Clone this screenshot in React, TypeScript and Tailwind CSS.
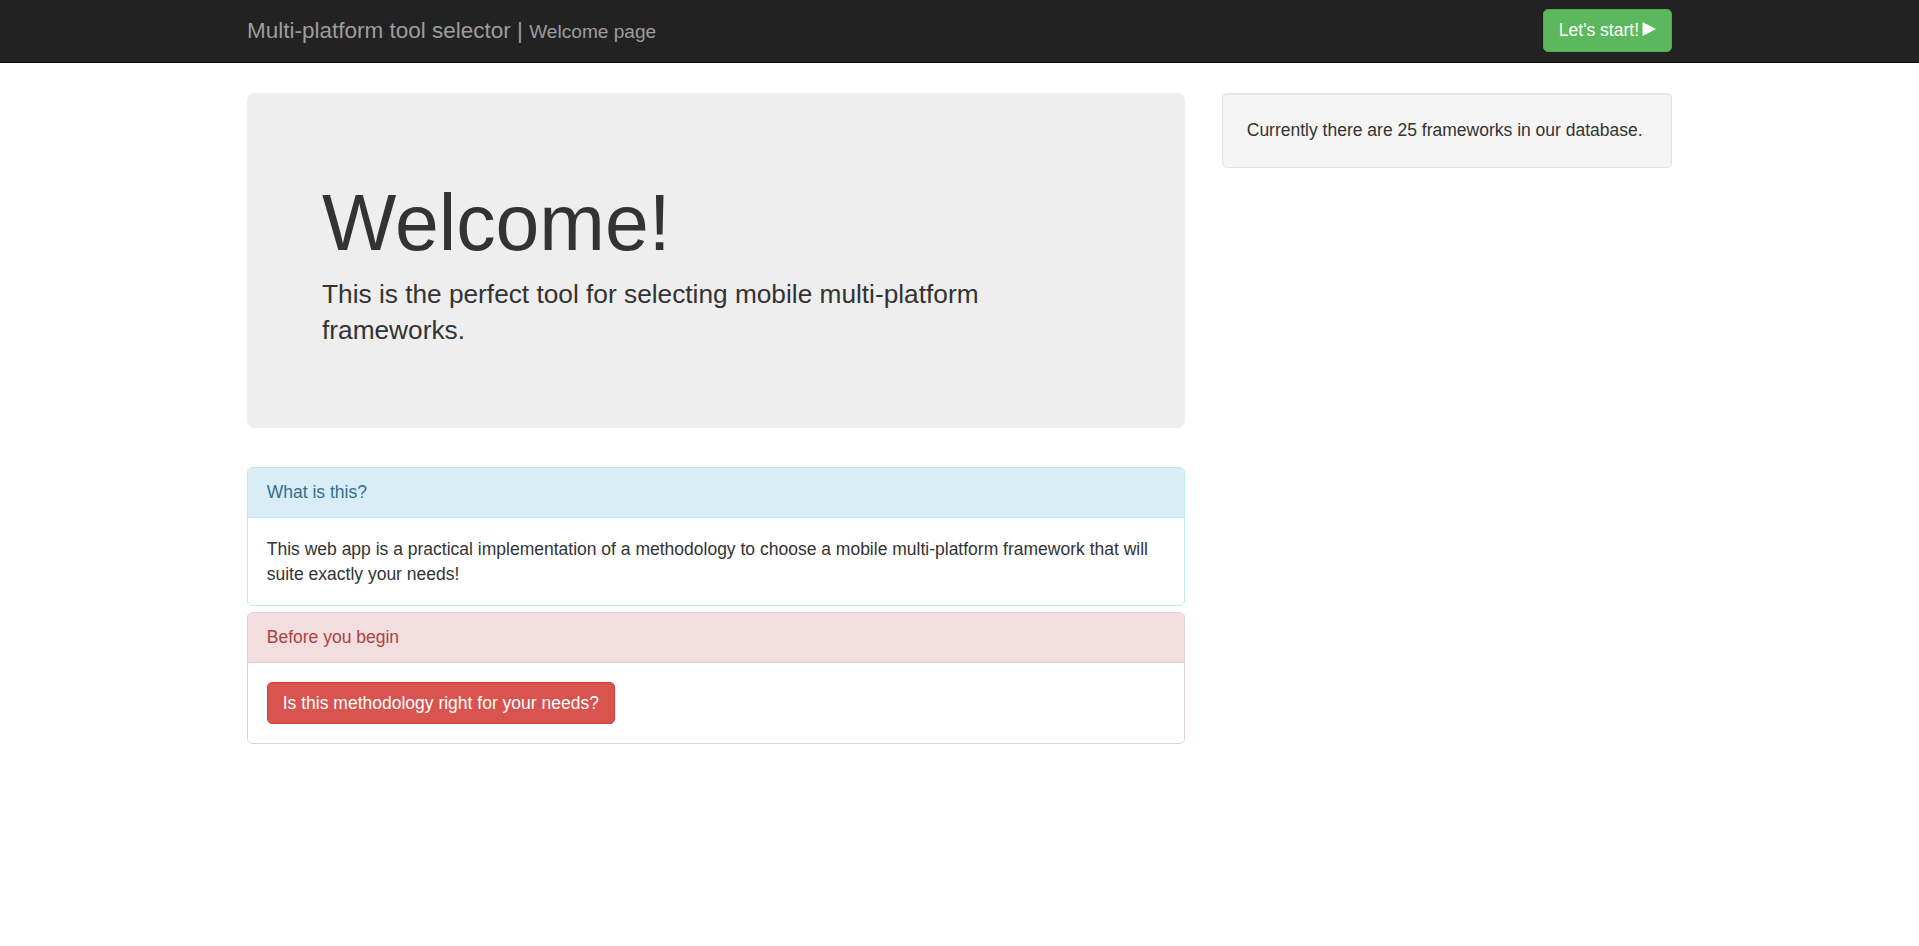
import React from 'react';

export default function App() {
  return (
    <div className="min-h-screen bg-white font-['Liberation_Sans',Arial,sans-serif] text-[#333] text-[17.5px] leading-[25px]">
      {/* Top navbar */}
      <nav className="h-[63px] bg-[#222] border-b border-[#080808]">
        <div className="max-w-[1425px] mx-auto h-full flex items-center justify-between">
          <a className="text-[22.5px] leading-[25px] text-[#9d9d9d] cursor-pointer">
            Multi-platform tool selector | <small className="text-[19.1px]">Welcome page</small>
          </a>
          <button className="self-start mt-[9px] h-[42.5px] px-[15px] flex items-center bg-[#5cb85c] border border-[#4cae4c] rounded-[5px] text-white text-[17.5px] leading-[25px]">
            <span>Let's start!</span>
            <svg width="14" height="14" viewBox="0 0 14 14" className="ml-[3px] mb-[2px]">
              <path d="M0.5 0 L14 7 L0.5 14 Z" fill="#fff" />
            </svg>
          </button>
        </div>
      </nav>

      {/* Main content */}
      <div className="max-w-[1425px] mx-auto pt-[30px] flex gap-[37.5px] items-start">
        <div className="w-[937.5px] shrink-0">
          {/* Jumbotron */}
          <div className="h-[335px] bg-[#eee] rounded-[7.5px] pt-[60px] px-[75px]">
            <h1 className="mt-[27px] mb-[9px] text-[78.75px] leading-[1.1] text-[#333]">Welcome!</h1>
            <p className="text-[26.25px] leading-[36.75px]">
              This is the perfect tool for selecting mobile multi-platform frameworks.
            </p>
          </div>

          {/* Info panel */}
          <div className="mt-[39px] border border-[#bce8f1] rounded-[5px] overflow-hidden">
            <div className="bg-[#d9edf7] text-[#31708f] border-b border-[#bce8f1] px-[18.75px] py-[12px]">
              What is this?
            </div>
            <div className="px-[18.75px] py-[18.5px]">
              This web app is a practical implementation of a methodology to choose a mobile multi-platform framework that will suite exactly your needs!
            </div>
          </div>

          {/* Danger panel */}
          <div className="mt-[6.25px] border border-[#ebccd1] rounded-[5px] overflow-hidden">
            <div className="bg-[#f2dede] text-[#a94442] border-b border-[#ebccd1] px-[18.75px] py-[12px]">
              Before you begin
            </div>
            <div className="px-[18.75px] py-[18.5px]">
              <button className="h-[42.5px] px-[15px] bg-[#d9534f] border border-[#d43f3a] rounded-[5px] text-white text-[17.5px] leading-[25px]">
                Is this methodology right for your needs?
              </button>
            </div>
          </div>
        </div>

        {/* Sidebar well */}
        <div className="w-[450px] shrink-0">
          <div className="bg-[#f5f5f5] border border-[#e3e3e3] rounded-[5px] p-[23.75px] shadow-[inset_0_1px_1px_rgba(0,0,0,0.05)]">
            Currently there are 25 frameworks in our database.
          </div>
        </div>
      </div>
    </div>
  );
}
